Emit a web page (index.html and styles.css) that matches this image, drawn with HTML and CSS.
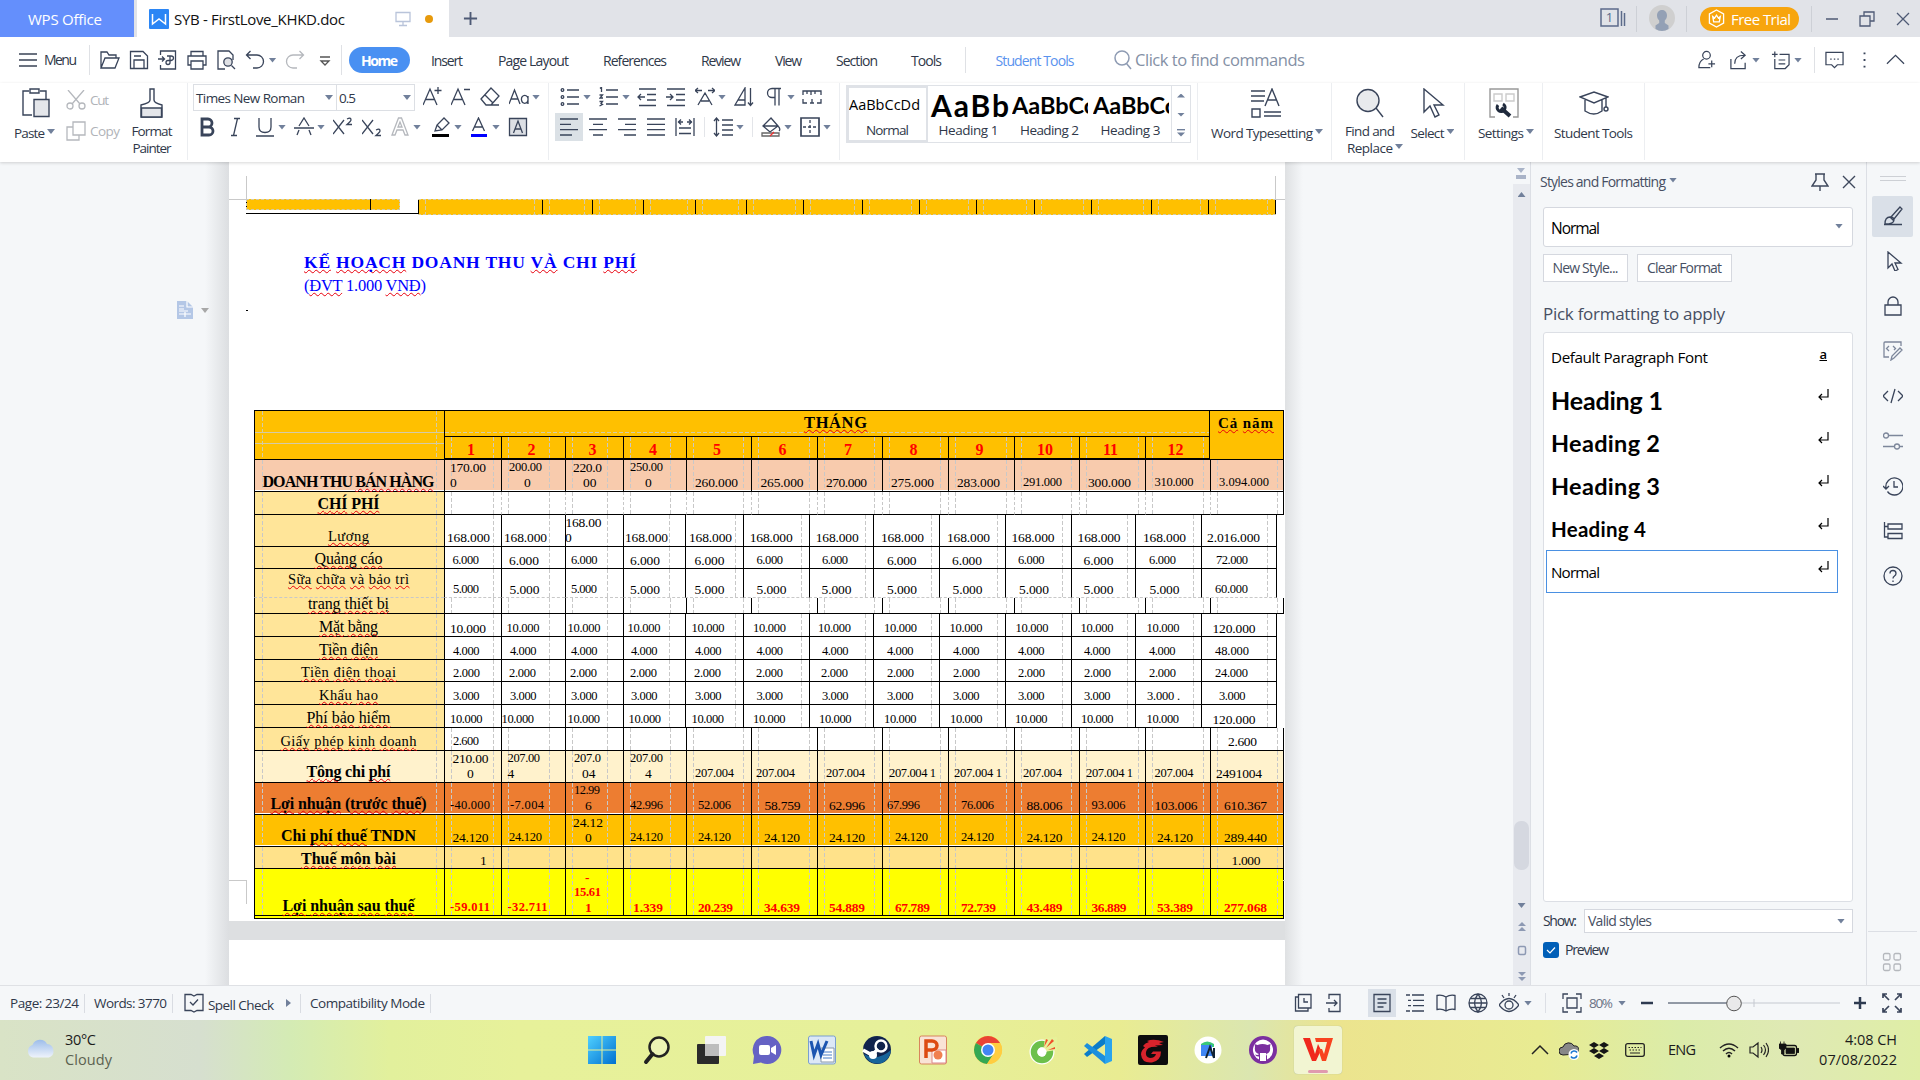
FILE: index.html
```html
<!DOCTYPE html>
<html lang="en">
<head>
<meta charset="utf-8">
<title>SYB - FirstLove_KHKD.doc</title>
<link rel="stylesheet" href="styles.css">
</head>
<body>
<header class="titlebar">
  <div class="tab-home"><span data-w="74">WPS Office</span></div>
  <div class="tab-doc">
    <svg class="wlogo" viewBox="0 0 20 20"><rect width="20" height="20" rx="1" fill="#2b86f5"/><path d="M3.500 5v10l6.500-5 6.500 5V5" fill="none" stroke="#fff" stroke-width="1.500"/></svg>
    <span data-w="171">SYB - FirstLove_KHKD.doc</span>
    <svg class="monitor" viewBox="0 0 16 16"><path d="M1 1.500h14v9H1zM8 10.500v3.500M4 14.500h8" fill="none" stroke="#b9c4da" stroke-width="1.300"/></svg>
    <i class="unsaved"></i>
  </div>
  <svg class="plus" viewBox="0 0 16 16"><path d="M8 1v14M1 8h14" stroke="#4e5a75" stroke-width="2"/></svg>
  <div class="window-tools">
    <svg class="wt1" viewBox="0 0 26 20"><path d="M1 1h17v17H1zM21.500 3v15M24.500 5v13" fill="none" stroke="#5c6b8a" stroke-width="1.500"/><text x="9.500" y="14" text-anchor="middle">1</text></svg>
    <div class="avatar"><svg viewBox="0 0 26 26"><circle cx="13" cy="13" r="13" fill="#cfcfcf"/><path d="M13 5c3.300 0 5 2.500 5 5.500 0 2-1 4-2.200 5v2.500l3.700 2.500v3.500c-4 2.500-9 2.500-13 0v-3.500l3.700-2.500v-2.500C9 14.500 8 12.500 8 10.500 8 7.500 9.700 5 13 5z" fill="#93a0b5"/></svg></div>
    <div class="trial-box"><div class="trial"><svg viewBox="0 0 18 20"><path d="M9 1l7.500 4.200v9.600L9 19l-7.500-4.200V5.200zM5 8l2 1.500L9 6.500l2 3L13 8l-1 5.500H6z" fill="none" stroke="#fff" stroke-width="1.400"/></svg><span data-w="60">Free Trial</span></div></div>
    <svg class="wmin" viewBox="0 0 12 12"><path d="M0 6h12" stroke="#4e5a75" stroke-width="1.500"/></svg>
    <svg class="wmax" viewBox="0 0 16 16"><path d="M1 5h10v10H1zM5 5V1h10v9h-4" fill="none" stroke="#4e5a75" stroke-width="1.300"/></svg>
    <svg class="wclose" viewBox="0 0 14 14"><path d="M1 1l12 12M13 1L1 13" stroke="#4e5a75" stroke-width="1.300"/></svg>
  </div>
</header>

<nav class="menubar">
  <div class="menu-btn"><svg viewBox="0 0 18 14"><path d="M0 1h18M0 7h18M0 13h18" stroke="#3a4356" stroke-width="1.300"/></svg><span data-w="33">Menu</span></div>
  <svg class="ic" viewBox="0 0 20 20"><path d="M1 18V2h6l2 3h7v3M1 18h14l4-10H5z"/></svg>
  <svg class="ic" viewBox="0 0 20 20"><path d="M1.500 1.500H14l4.500 4.500v12.500h-17zM5 18V10h10v8M5 6h7"/></svg>
  <svg class="ic" viewBox="0 0 20 20"><path d="M2.500 5V1h15v18h-15v-4M0 9h6M4 6.500L6.500 9 4 11.500M9 6h4q2.500 0 2.500 2T13 10.500h-3q-2 0-2 2t2 2 2-2V6"/></svg>
  <svg class="ic" viewBox="0 0 20 20"><path d="M4 6V1.500h12V6M4 15H1V6h18v9h-3M4 11h12v8H4z"/></svg>
  <svg class="ic" viewBox="0 0 20 20"><path d="M9 19H2V1h11l4 4v5M15.500 15.500L19 19"/><circle cx="12" cy="12" r="4.200" fill="#dfe1e5"/></svg>
  <svg class="ic" viewBox="0 0 20 20"><path d="M5.500 1L1.500 5l4 4M1.500 5H12a6 6 0 010 13H8"/></svg>
  <i class="caret"></i>
  <svg class="ic dim" viewBox="0 0 20 20"><path d="M14.500 1l4 4-4 4M18.500 5H8a6 6 0 000 13h4"/></svg>
  <svg class="ic s" viewBox="0 0 20 20"><path d="M5 7h10M6 11h8l-4 4z"/></svg>
  <i></i>
  <b class="home-pill"><span data-w="37">Home</span></b>
  <span data-w="32">Insert</span>
  <span data-w="71">Page Layout</span>
  <span data-w="64">References</span>
  <span data-w="40">Review</span>
  <span data-w="27">View</span>
  <span data-w="42">Section</span>
  <span data-w="31">Tools</span>
  <div class="student"><span data-w="79">Student Tools</span></div>
  <div class="search"><svg viewBox="0 0 18 20"><circle cx="8" cy="8" r="7"/><path d="M12.500 13.500L17 19"/></svg><span data-w="170">Click to find commands</span></div>
  <div class="menu-right">
    <svg class="ic" viewBox="0 0 20 20"><circle cx="10" cy="5" r="4"/><path d="M7 9c-4 2-5 5-5 9h12M12 14h7M15.500 10.500v7"/></svg>
    <svg class="ic" viewBox="0 0 20 20"><path d="M2 9v10h15v-6M6 14c0-6 3-9 10-9M12.500 1L17 5l-4.500 4"/></svg><i class="caret"></i>
    <svg class="ic" viewBox="0 0 20 20"><path d="M4 1v6M1 4h6M9 4h10v11l-4 4H4V9M8 10h7M8 14h7"/></svg><i class="caret"></i>
    <i class="bar"></i>
    <svg class="ic" viewBox="0 0 20 20"><path d="M1 2h18v13h-6l-3 3-3-3H1zM5.500 9h1.500M9.300 9h1.500M13 9h1.500" /></svg>
    <svg class="ic" viewBox="0 0 20 20"><path d="M10 2v2M10 9v2M10 16v2" stroke-width="2"/></svg>
    <svg class="ic" viewBox="0 0 20 20"><path d="M1 14l9-9 9 9"/></svg>
  </div>
</nav>

<section class="ribbon">
  <div class="group clipboard">
    <div class="tool"><svg class="big" viewBox="0 0 28 30"><path d="M7 3H1v24h9M18 3h6v8M8 1h9v4H8z"/><path d="M12 11.500h15v17H12z" fill="#e4e6ea"/></svg><span class="lb"><span data-w="31">Paste</span><i class="caret"></i></span></div>
    <div class="cutcopy">
      <div><svg class="ic dim" viewBox="0 0 20 20"><path d="M2 0l12 14M18 0L6 14"/><circle cx="4" cy="16" r="3"/><circle cx="16" cy="16" r="3"/></svg><span data-w="19">Cut</span></div>
      <div><svg class="ic dim" viewBox="0 0 20 20"><path d="M7 1h12v13H7zM7 6H1v13h12v-5"/></svg><span data-w="30">Copy</span></div>
    </div>
    <div class="tool two"><svg class="big" viewBox="0 0 28 30"><path d="M12 1h4v11q0 3 8 5v12H3V17q9-2 9-5z"/><path d="M3.500 20h20v9h-20z" fill="#e4e6ea"/></svg><span data-w="41">Format</span><span data-w="39">Painter</span></div>
  </div>

  <div class="group font">
    <div class="row f1">
      <div class="combo"><span data-w="109">Times New Roman</span><i class="caret"></i></div>
      <div class="combo c2"><span data-w="17">0.5</span><i class="caret"></i></div>
      <svg class="ic" viewBox="0 0 20 20"><path d="M0 18L7 2l7 16M2.500 12.500h9M15 0v7M11.500 3.500h7"/></svg>
      <svg class="ic" viewBox="0 0 20 20"><path d="M0 18L7 2l7 16M2.500 12.500h9M13 2.500h6"/></svg>
      <svg class="ic" viewBox="0 0 20 20"><path d="M1 12L11 1l8 8-8 9H6zM6 18h13M5 8l8 8"/></svg>
      <div class="tb"><svg class="ic" viewBox="0 0 20 20"><path d="M0 17L5.500 3 11 17M2 12h7M19 17V9M19 13a3.300 4 0 10-6.500 0 3.300 4 0 006.500 0"/></svg><i class="caret"></i></div>
    </div>
    <div class="row f2">
      <svg class="ic" viewBox="0 0 20 20"><path d="M4 2h6a4 4 0 010 8H4zM4 10h7a4 4 0 010 8H4z" stroke-width="2.800"/></svg>
      <svg class="ic" viewBox="0 0 20 20"><path d="M8 1.500h6M5 18.500h6M11.500 1.500l-4 17"/></svg>
      <div class="tb"><svg class="ic" viewBox="0 0 20 20"><path d="M4 1v9q0 5.500 6 5.500t6-5.500V1M1 19h18"/></svg><i class="caret"></i></div>
      <div class="tb"><svg class="ic" viewBox="0 0 20 20"><path d="M5 9l5-8 5 8M3 18l2-5M17 18l-2-5M0 11h20"/></svg><i class="caret"></i></div>
      <svg class="ic" viewBox="0 0 20 20"><path d="M0 3l11 14M11 3L0 17M14 2q4-2 4 1 0 1-4 4.500h5"/></svg>
      <svg class="ic" viewBox="0 0 20 20"><path d="M0 3l11 14M11 3L0 17M14 13q4-2 4 1 0 1-4 4.500h5"/></svg>
      <div class="tb"><svg class="ic dim" viewBox="0 0 20 20"><path d="M2 18L8.500 1h3L18 18h-3l-2-5H7l-2 5zM8 10h4l-2-5z"/></svg><i class="caret"></i></div>
      <div class="tb"><svg class="ic" viewBox="0 0 20 20"><path d="M4 14l2-6 7-7 5 5-7 7zM6 8l5 5"/><path d="M1 18.500h17" stroke="#000" stroke-width="3"/></svg><i class="caret"></i></div>
      <div class="tb"><svg class="ic" viewBox="0 0 20 20"><path d="M3.500 14L9.500 1l6 13M5.500 10h8"/><path d="M2 18.500h16" stroke="#00f" stroke-width="3"/></svg><i class="caret"></i></div>
      <svg class="ic" viewBox="0 0 20 20"><path d="M1.500 1.500h17v17h-17z" fill="#dcdfe4"/><path d="M5.500 16L10 4l4.500 12M7 12h6"/></svg>
    </div>
  </div>

  <div class="group para">
    <div class="row p1">
      <div class="tb"><svg class="ic" viewBox="0 0 20 20"><path d="M7 3h12M7 10h12M7 17h12"/><circle cx="2.500" cy="3" r="1.300"/><circle cx="2.500" cy="10" r="1.300"/><circle cx="2.500" cy="17" r="1.300"/></svg><i class="caret"></i></div>
      <div class="tb"><svg class="ic" viewBox="0 0 20 20"><path d="M7 3h12M7 10h12M7 17h12M1 1.500L2.500 0v5M0.500 8h3L1 11h3M0.500 14.500h3L2 16.500l1.500 1-3 1.500"/></svg><i class="caret"></i></div>
      <svg class="ic" viewBox="0 0 20 20"><path d="M2 2h17M10 7.500h9M10 13h9M2 18.500h17M8 10H1M4 7l-3 3 3 3"/></svg>
      <svg class="ic" viewBox="0 0 20 20"><path d="M1 2h18M10 7.500h9M10 13h9M1 18.500h18M0 10h7M4 7l3 3-3 3"/></svg>
      <div class="tb"><svg class="ic" viewBox="0 0 20 20"><path d="M3 18l7-12 7 12M6 14h8M0 3.500h7M13 3.500h7M3 1L0 3.500 3 6M17 1l3 2.500L17 6"/></svg><i class="caret"></i></div>
      <svg class="ic" viewBox="0 0 20 20"><path d="M1 18L11 1v17zM4 13h7M16.500 1v17M14 15.500l2.500 3 2.500-3"/></svg>
      <div class="tb"><svg class="ic" viewBox="0 0 20 20"><path d="M17 1.500H8a4.500 4.500 0 000 9h3M11 1.500v17M15 1.500v17"/></svg><i class="caret"></i></div>
      <svg class="ic" viewBox="0 0 20 20"><path d="M1 8V4h18v4M5 4v3M9 4v4M13 4v3M1 12v4h4M19 12v4h-4M8 16h4M10 12v4"/></svg>
    </div>
    <div class="row p2">
      <svg class="ic on" viewBox="0 0 20 20"><path d="M1 2h18M1 7.300h11M1 12.700h18M1 18h12"/></svg>
      <svg class="ic" viewBox="0 0 20 20"><path d="M1 2h18M5 7.300h10M1 12.700h18M5 18h10"/></svg>
      <svg class="ic" viewBox="0 0 20 20"><path d="M1 2h18M8 7.300h11M1 12.700h18M7 18h12"/></svg>
      <svg class="ic" viewBox="0 0 20 20"><path d="M1 2h18M1 7.300h18M1 12.700h18M1 18h18"/></svg>
      <svg class="ic" viewBox="0 0 20 20"><path d="M1 1v18M19 1v18M4 11h12M4 16.500h12M3 5h5M12 5h5M6 2.500L3.500 5 6 7.500M14 2.500L16.500 5 14 7.500"/></svg>
      <div class="tb pre"><svg class="ic" viewBox="0 0 20 20"><path d="M9 3h11M9 8h11M9 13h11M9 18h11M3.500 1v18M1 4l2.500-3L6 4M1 16l2.500 3L6 16"/></svg><i class="caret"></i></div>
      <div class="tb pre"><svg class="ic" viewBox="0 0 20 20"><path d="M2 9l8-8 7 8-8 6zM3 9h13M17 9q3 3 1 5"/><path d="M1 16h17v3H1z" stroke="#666"/><path d="M9 19l4-4" stroke="#e33"/></svg><i class="caret"></i></div>
      <div class="tb"><svg class="ic" viewBox="0 0 20 20"><path d="M1 1h18v18H1z" stroke-width="1.700"/><path d="M10 3v14M3 10h14" stroke-dasharray="3 2"/></svg><i class="caret"></i></div>
    </div>
  </div>

  <div class="group styles">
    <div class="gallery">
      <div class="st sel"><span class="smp n" data-w="71">AaBbCcDd</span><span class="nm" data-w="43">Normal</span></div>
      <div class="st"><span class="smp h1" data-w="78">AaBb</span><span class="nm" data-w="60">Heading 1</span></div>
      <div class="st"><span class="smp h2">AaBbCc</span><span class="nm" data-w="59">Heading 2</span></div>
      <div class="st"><span class="smp h2">AaBbCc</span><span class="nm" data-w="60">Heading 3</span></div>
      <div class="gscroll"><i class="caret up"></i><i class="caret"></i><svg viewBox="0 0 10 8"><path d="M1 .7h8" stroke="#71809b" stroke-width="1.400"/><path d="M1 3.500h8L5 7.500z" fill="#71809b"/></svg></div>
    </div>
  </div>

  <div class="group one word"><div class="tool"><svg class="big w30" viewBox="0 0 30 30"><path d="M0 3h14M0 8h14M0 13h13M13 24h17M13 28h17M1 21h8v8H1zM14 18l7-17 7 17M17 12h8"/></svg><span class="lb"><span data-w="102">Word Typesetting</span><i class="caret"></i></span></div></div>
  <div class="group find">
    <div class="tool two"><svg class="big" viewBox="0 0 28 30"><ellipse cx="12" cy="12.500" rx="11" ry="11" fill="#e8eaed"/><path d="M20 20l7 9"/></svg><span data-w="50">Find and</span><span class="lb"><span data-w="46">Replace</span><i class="caret"></i></span></div>
    <div class="tool pick"><svg class="big" viewBox="0 0 28 30"><path d="M5 1v23l6-6 5 11 4-2-5-10h9z"/></svg><span class="lb"><span data-w="34">Select</span><i class="caret"></i></span></div>
  </div>
  <div class="group one setup"><div class="tool"><svg class="big w30" viewBox="0 0 30 30"><path d="M6 29H1V1h28v28h-5" stroke="#999"/><path d="M5 6h8v7H5zM17 6h8v7h-8z" stroke="#ccc"/><path d="M12 20l9 8" stroke-width="4" stroke="#1f2a3c"/><path d="M9 17a4 4 0 105-1" stroke-width="3" stroke="#1f2a3c"/></svg><span class="lb"><span data-w="46">Settings</span><i class="caret"></i></span></div></div>
  <div class="group one campus"><div class="tool"><svg class="big w30" viewBox="0 0 30 30"><path d="M1 9l14-5 14 5-14 6zM6 12v11q9 6 17 0V12M27 10v9"/><circle cx="27" cy="21" r="2"/></svg><span class="lb"><span data-w="79">Student Tools</span></span></div></div>
</section>

<main class="workspace">
  <div class="gutter">
    <svg viewBox="0 0 16 18"><path d="M0 0h10l6 6v12H0z" fill="#b4c7e6"/><path d="M10 0v6h6M2 5h5M2 8h5M2 10h9M2 13h12M8 11v5" fill="none" stroke="#fff" stroke-width="1.200"/></svg><i class="caret"></i>
  </div>
  <div class="pages">
    <article class="page">
      <i class="mark tl"></i><i class="mark tr"></i><i class="mark bl"></i><i class="mark br"></i><i class="dot"></i>
      <div class="prev-table"><div class="stub"><i></i></div><div class="stub-row" id="stubRow"></div></div>
      <h1><span data-w="332"><u>KẾ</u> <u>HOẠCH</u> DOANH THU <u>VÀ</u> CHI <u>PHÍ</u></span></h1>
      <p class="unit"><span data-w="122">(<u>ĐVT</u> 1.000 <u>VNĐ</u>)</span></p>
      <div class="plan" id="plan">
        <div class="phead">
          <div class="pcorner"></div>
          <div class="pmid"><div class="pm-title"><span data-w="63"><u>THÁNG</u></span></div><div class="pm-months" id="months"></div></div>
          <div class="pyear"><span data-w="55"><u>Cả</u> <u>năm</u></span></div>
        </div>
      </div>
    </article>
    <div class="gap"></div>
    <div class="page next"></div>
  </div>
  <div class="rgutter"></div>
  <div class="vscroll">
    <svg class="vtop" viewBox="0 0 10 11"><path d="M1 0h8L5 5zM0 7h10v4H0z" fill="#aab4c8"/></svg>
    <div class="track"><i class="caret up"></i><i class="thumb"></i><i class="caret"></i>
      <svg viewBox="0 0 10 60"><path d="M5 1l4 4H1zM5 6l4 4H1zM1 51h8l-4 4zM1 56h8l-4 4z" fill="#8d99b3"/><rect x="1.500" y="25.500" width="7" height="8" rx="1.500" fill="none" stroke="#8d99b3" stroke-width="1.500"/></svg></div>
  </div>

  <aside class="panel">
    <div class="p-head"><span data-w="126">Styles and Formatting</span><i class="caret"></i>
      <svg class="pin" viewBox="0 0 18 18"><path d="M4 1h10M5 1v6l-4 6h16l-4-6V1M9 13v5" /></svg>
      <svg class="px" viewBox="0 0 14 14"><path d="M1 1l12 12M13 1L1 13"/></svg></div>
    <div class="p-combo"><span data-w="49">Normal</span><i class="caret"></i></div>
    <div class="p-btns"><div><span data-w="66">New Style...</span></div><div><span data-w="75">Clear Format</span></div></div>
    <div class="p-pick"><span data-w="182">Pick formatting to apply</span></div>
    <div class="p-list">
      <div class="pi d"><span data-w="157">Default Paragraph Font</span><em>a</em></div>
      <div class="pi h a"><span data-w="112">Heading 1</span><svg viewBox="0 0 12 12"><path d="M11 0v8H2M5 5L2 8l3 3"/></svg></div>
      <div class="pi h b"><span data-w="109">Heading 2</span><svg viewBox="0 0 12 12"><path d="M11 0v8H2M5 5L2 8l3 3"/></svg></div>
      <div class="pi h b"><span data-w="109">Heading 3</span><svg viewBox="0 0 12 12"><path d="M11 0v8H2M5 5L2 8l3 3"/></svg></div>
      <div class="pi h c"><span data-w="95">Heading 4</span><svg viewBox="0 0 12 12"><path d="M11 0v8H2M5 5L2 8l3 3"/></svg></div>
      <div class="pi cur"><span data-w="49">Normal</span><svg viewBox="0 0 12 12"><path d="M11 0v8H2M5 5L2 8l3 3"/></svg></div>
    </div>
    <div class="p-show"><span data-w="34">Show:</span><div><span data-w="64">Valid styles</span><i class="caret"></i></div></div>
    <div class="p-prev"><svg viewBox="0 0 16 16"><rect width="16" height="16" rx="3" fill="#005fb8"/><path d="M4 8l3 3 5-5.500" fill="none" stroke="#fff" stroke-width="1.200"/></svg><span data-w="44">Preview</span></div>
  </aside>

  <aside class="rail">
    <i class="grip"></i>
    <div class="on"><svg class="ic" viewBox="0 0 20 20"><path d="M1 18.500h18M8 11l9-10 2 2-8 10M2 18q0-7 5-7 4 0 4 3 0 4-9 4zM7 11l4 4"/></svg></div>
    <div><svg class="ic" viewBox="0 0 20 20"><path d="M5 1v16l4-4 3 7 3-1.500L12 12h6z"/></svg></div>
    <div><svg class="ic" viewBox="0 0 20 20"><path d="M2 9h16v10H2zM5 9V6a5 5 0 0110 0v3"/></svg></div>
    <div><svg class="ic soft" viewBox="0 0 20 20"><path d="M6 16H1V2q0-1 1-1h16v4M6 5L3.500 7.500 6 10M10 5l2.500 2.500L11 9M8 19l1-4 8-8 2 2-8 8z"/></svg></div>
    <div><svg class="ic" viewBox="0 0 20 20"><path d="M5 5l-5 5 5 5M15 5l5 5-5 5M12 3L8 17"/></svg></div>
    <div><svg class="ic soft" viewBox="0 0 20 20"><circle cx="3" cy="4.500" r="2.500"/><circle cx="14" cy="15.500" r="2.500"/><path d="M6 4.500h14M0 15.500h11M17 15.500h3"/></svg></div>
    <div><svg class="ic" viewBox="0 0 20 20"><path d="M3 12a8.500 8.500 0 111.500 3.500M0 10l3 3 3-3M11 5v6h4"/></svg></div>
    <div><svg class="ic" viewBox="0 0 20 20"><path d="M1.500 1v15H5M1.500 5.500H5M5 3h14v5H5zM5 12.500h14v5H5z"/></svg></div>
    <div><svg class="ic" viewBox="0 0 20 20"><circle cx="10" cy="10" r="9"/><path d="M7 7.500q0-3 3-3t3 3q0 1.500-1.500 2.500T10 12.500M10 14.500v1.500"/></svg></div>
    <footer><svg class="ic dim" viewBox="0 0 20 20"><rect x="1.500" y="1.500" width="6.500" height="6.500" rx="1.500"/><rect x="12" y="1.500" width="6.500" height="6.500" rx="1.500"/><rect x="1.500" y="12" width="6.500" height="6.500" rx="1.500"/><rect x="12" y="12" width="6.500" height="6.500" rx="1.500"/></svg></footer>
  </aside>
</main>

<section class="status">
  <div class="s1"><span data-w="69">Page: 23/24</span></div>
  <div class="s2"><span data-w="73">Words: 3770</span></div>
  <div class="s3"><svg class="ic" viewBox="0 0 20 20"><path d="M1 1.500h6l3 1.500 3-1.500h6v16h-6L10 19l-3-1.500H1zM6 9l3 3 5-5.500"/></svg><span data-w="66">Spell Check</span><i class="caret right"></i></div>
  <div class="s4"><span data-w="115">Compatibility Mode</span></div>
  <div class="s-right">
    <svg class="ic" viewBox="0 0 20 20"><path d="M5 4H2.500V18H15v-3M5.500 1.500H18V15H5.500zM11 5v4h4"/></svg>
    <svg class="ic" viewBox="0 0 20 20"><path d="M4 6V1.500h11V6M15 13v5.500H4V15M1 10h11M9 7l3 3-3 3M15 6v7"/></svg>
    <div class="act"><svg class="ic" viewBox="0 0 20 20"><path d="M2 1.500h16v17H2zM5.500 6h9M5.500 10h9M5.500 14h6"/></svg></div>
    <svg class="ic" viewBox="0 0 20 20"><path d="M1 2h4M7 2h12M3 7.300h3M8 7.300h11M3 12.600h3M8 12.600h11M1 18h4M7 18h12"/></svg>
    <svg class="ic" viewBox="0 0 20 20"><path d="M10 4Q6 1.500 1 2.500v14q5-1 9 1.500 4-2.500 9-1.500v-14q-5-1-9 1.500v14"/></svg>
    <svg class="ic" viewBox="0 0 20 20"><circle cx="10" cy="10" r="9"/><path d="M1 10h18M10 1q-7 9 0 18 7-9 0-18M2.500 5.500h15M2.500 14.500h15"/></svg>
    <svg class="ic" viewBox="0 0 20 20"><path d="M0 12q10-13 20 0-10 13-20 0zM10 0v3M3 2l2 3M17 2l-2 3"/><circle cx="10" cy="12" r="4"/></svg>
    <i class="caret"></i>
    <div class="fit"><svg class="ic" viewBox="0 0 20 20"><path d="M1 6V1h5M14 1h5v5M19 14v5h-5M6 19H1v-5M5 5h10v10H5z"/></svg></div>
    <span data-w="24">80%</span><i class="caret"></i>
    <svg class="pm" viewBox="0 0 12 12"><path d="M0 6h12" stroke="#2d3a50" stroke-width="2.500"/></svg>
    <svg class="slider" viewBox="0 0 172 20"><path d="M66 10h106M86 6v8" stroke="#c5c9d0"/><path d="M0 10h60" stroke="#2d3a50"/><circle cx="66" cy="10.500" r="7.300" fill="#e9e9ea" stroke="#555"/></svg>
    <svg class="pm" viewBox="0 0 12 12"><path d="M0 6h12M6 0v12" stroke="#2d3a50" stroke-width="2.500"/></svg>
    <svg class="ic" viewBox="0 0 20 20"><path d="M7 7L1 1M1 5V1h4M13 7l6-6M15 1h4v4M7 13l-6 6M1 15v4h4M13 13l6 6M19 15v4h-4" stroke-width="1.700"/></svg>
  </div>
</section>

<footer class="taskbar">
  <div class="weather"><svg viewBox="0 0 30 20"><defs><linearGradient id="cl" x1="0" y1="0" x2="0" y2="1"><stop offset="0" stop-color="#9dbdea"/><stop offset="1" stop-color="#eef3fb"/></linearGradient></defs><path d="M7 19.500a6.500 6.500 0 01-.5-12.500A8 8 0 0121 6a7 7 0 012 13.500z" fill="url(#cl)"/></svg>
    <div><span data-w="31">30°C</span><span class="g" data-w="47">Cloudy</span></div></div>
  <div class="apps">
    <svg viewBox="0 0 30 30"><defs><linearGradient id="wn" x1="0" y1="0" x2="1" y2="1"><stop offset="0" stop-color="#4fd0ff"/><stop offset="1" stop-color="#0070d0"/></linearGradient></defs><path d="M1 1h13.500v13.500H1zM15.500 1H29v13.500H15.500zM1 15.500h13.500V29H1zM15.500 15.500H29V29H15.500z" fill="url(#wn)"/></svg>
    <svg viewBox="0 0 30 30"><circle cx="17" cy="12" r="9.500" fill="#ffffff44" stroke="#222" stroke-width="2.500"/><path d="M10.500 19L4 27" stroke="#222" stroke-width="4" stroke-linecap="round"/></svg>
    <svg viewBox="0 0 30 30"><rect x="0" y="9" width="22" height="20" rx="1" fill="#2b2b2b"/><rect x="8" y="1" width="21" height="20" rx="1" fill="#f4f4f4"/><rect x="8" y="9" width="14" height="12" fill="#bdbdbd"/></svg>
    <svg viewBox="0 0 30 30"><path d="M15 1a14 14 0 11-6 26.500L1 29l1-8A14 14 0 0115 1z" fill="#6562c4"/><rect x="7" y="10" width="11" height="10" rx="2" fill="#fff"/><path d="M19 13l5-3v10l-5-3z" fill="#fff"/></svg>
    <svg viewBox="0 0 30 30"><rect x="1.500" y="1" width="27" height="28" rx="2" fill="#dce8f7" stroke="#7a9fd0"/><path d="M14 13h13v14H14z" fill="#fff" stroke="#89a"/><path d="M16 17h9M16 20h9M16 23h9" stroke="#4a7fc8"/><path d="M4 6l3 14 4-11 3 11L20 6" fill="none" stroke="#1c55b0" stroke-width="3"/></svg>
    <svg viewBox="0 0 30 30"><circle cx="15" cy="15" r="14" fill="#10234c"/><path d="M2 19q5 12 18 9 8-4 9-13-14 12-27 4z" fill="#17649a"/><circle cx="19" cy="11" r="5.500" fill="none" stroke="#fff" stroke-width="2.500"/><circle cx="11" cy="20" r="4" fill="#fff"/><path d="M1 15l9 5 6-6" stroke="#fff" stroke-width="3.500" fill="none"/></svg>
    <svg viewBox="0 0 30 30"><rect x="1.500" y="1" width="27" height="28" rx="2" fill="#f9e3d6" stroke="#d8855c"/><path d="M14 15h14v13H14z" fill="#fff" stroke="#d88"/><circle cx="20" cy="20" r="4.500" fill="#f08050"/><path d="M8 23V6h6a5 4.500 0 010 9H9" fill="none" stroke="#dd4b12" stroke-width="3.500"/></svg>
    <svg viewBox="0 0 30 30"><circle cx="15" cy="15" r="14" fill="#ffcd40"/><path d="M15 15L2.900 8A14 14 0 0127.100 8z" fill="#ea4335"/><path d="M15 15L2.900 8A14 14 0 0014 29l7-10z" fill="#34a853"/><path d="M15 8h12.100A14 14 0 0114 29l7-11z" fill="#ffcd40"/><circle cx="15" cy="15" r="7" fill="#fff"/><circle cx="15" cy="15" r="5.500" fill="#4285f4"/></svg>
    <svg viewBox="0 0 30 30"><circle cx="14" cy="17" r="8" fill="#fff" stroke="#fff" stroke-width="9"/><circle cx="14" cy="17" r="8" fill="none" stroke="#6dc04b" stroke-width="6.500"/><path d="M15 17l2-14 12-1v13z" fill="#e7f19a"/><path d="M16 12l2-8 2 1zM18 13l6-9 2 2zM20 15l7-3v2z" fill="#f0502a"/><path d="M16 17h9q-1 8-9 8z" fill="#6dc04b"/><circle cx="14" cy="17" r="4.500" fill="#fff"/></svg>
    <svg viewBox="0 0 30 30"><path d="M22 1l7 3v22l-7 3z" fill="#29a4ee"/><path d="M22 1L1 19l3 3L22 9z" fill="#0a7cc9"/><path d="M22 29L1 11l3-3 18 13z" fill="#1b8fdd"/></svg>
    <svg viewBox="0 0 30 30"><rect width="30" height="30" rx="2" fill="#0c0c0e"/><path d="M5 11q2-3 6-4l-2-1q7-3 17 1l-5 1 4 2-8 .5 3 1.500q-11-1-12 5-1 5 4 6 5 0 6-4h-5l2-2.500h8q0 9-9 11-10 1-11-8 0-4 4-7z" fill="#d8232c"/></svg>
    <svg viewBox="0 0 30 30"><circle cx="15" cy="15" r="13.500" fill="#fff"/><path d="M8 9q6-5 13 0v3H8z" fill="#39c77a"/><rect x="8" y="10" width="11" height="11" fill="#3f86f5"/><path d="M13 23l4-11 4 11M21 13v10" fill="none" stroke="#123" stroke-width="2"/></svg>
    <svg viewBox="0 0 30 30"><circle cx="15" cy="15" r="14" fill="#7b2fa0"/><path d="M15 4.500a10.500 10.500 0 00-4 20v-3q-3 .5-4-2 3 1 4-.5-5-1-4-7l-.5-3 3 1q5-2 10 0l3-1-.5 3q1 6-4 7l1 2v3.500A10.500 10.500 0 0015 4.500z" fill="#fff"/><path d="M10 13q5-3 10 0 1 6-5 6t-5-6z" fill="#7b2fa0"/><path d="M12 18h6v8h-6z" fill="#fff"/></svg>
    <div class="wps"><svg viewBox="0 0 30 30"><path d="M0 4h7l5 16 3-10 3 6-5 11H9z" fill="#f0281c"/><path d="M12 4h18l-7 23h-4l-4-12h4l2 5 3-12H13z" fill="#f8431f"/></svg></div>
  </div>
  <div class="tray">
    <svg class="t1" viewBox="0 0 20 20"><path d="M2 14l8-8 8 8" fill="none" stroke="#222" stroke-width="1.500"/></svg>
    <svg class="t2" viewBox="0 0 20 20"><path d="M4 15a4 4 0 010-8 6 6 0 0111-1 4 4 0 012 8z" fill="#888" stroke="#222"/><circle cx="15" cy="14.500" r="5.500" fill="#fff"/><path d="M12 13.500a3.300 3.300 0 016-1M18 15.500a3.300 3.300 0 01-6 1" fill="none" stroke="#1976d2" stroke-width="1.600"/></svg>
    <svg class="t3" viewBox="0 0 20 20"><path d="M5 2l5 3-5 3-5-3zM15 2l5 3-5 3-5-3zM5 8l5 3-5 3-5-3zM15 8l5 3-5 3-5-3zM10 13l5 3-5 3-5-3z" fill="#151515"/></svg>
    <svg class="t4" viewBox="0 0 20 20"><rect x=".7" y="3.700" width="18.600" height="12.600" rx="2" fill="none" stroke="#222" stroke-width="1.300"/><path d="M3.500 7.500h13M4.500 10h12" stroke="#222" stroke-dasharray="1.500 1.500"/><path d="M5 13h10" stroke="#222"/></svg>
    <span class="eng" data-w="28">ENG</span>
    <svg class="t5" viewBox="0 0 20 20"><path d="M1 8q9-8 18 0M4 11q6-5.500 12 0M7 14q3-3 6 0" fill="none" stroke="#222" stroke-width="1.500"/><circle cx="10" cy="16" r="1.500"/></svg>
    <svg class="t6" viewBox="0 0 20 20"><path d="M1 7h3l5-4v14l-5-4H1zM12 7q2 3 0 6M14.500 5q4 5 0 10M17 3q5 7 0 14" fill="none" stroke="#222" stroke-width="1.200"/></svg>
    <svg class="t7" viewBox="0 0 20 20"><rect x="4" y="5.500" width="13.500" height="10" rx="2" fill="none" stroke="#111" stroke-width="1.300"/><path d="M7 8h8.500v5.500H7zM18 8.500h2v4h-2zM0 4h7v4l-2 2v4H2.500v-4L0 8zM1.500 1.500v3M5 1.500v3" fill="#111" stroke="#111" stroke-width=".8"/></svg>
    <div class="clock"><span data-w="52">4:08 CH</span><span data-w="78">07/08/2022</span></div>
  </div>
</footer>
<script src="app.js"></script>
</body>
</html>
```
FILE: styles.css
```css
*{box-sizing:border-box}
body{margin:0;width:1920px;height:1080px;overflow:hidden;font:14px/18px "Open Sans","Noto Sans",sans-serif;color:#2f3849;background:#fff}
svg{display:block;flex:none}
span{white-space:nowrap}
.ic{width:20px;height:20px;fill:none;stroke:#39445a;stroke-width:1.3}
.ic.dim{stroke:#b5b8bd}
.ic.soft{stroke:#7d879b}
.ic.s{stroke:#555}
.caret{width:8px;height:5px;flex:none;background:#71809b;clip-path:polygon(0 0,100% 0,50% 100%)}
.caret.up{clip-path:polygon(50% 0,100% 100%,0 100%)}
.caret.right{width:5px;height:8px;clip-path:polygon(0 0,100% 50%,0 100%)}

.titlebar{display:flex;height:37px;background:#e1e3e8;align-items:center;font-size:15px}
.tab-home{width:134px;height:37px;background:#648ffc;color:#fff;display:flex;align-items:center;justify-content:center;margin-right:3px;padding:1px 4px 0 0}
.tab-doc{width:312px;height:37px;background:#fff;display:flex;align-items:center;padding-left:12px;color:#111}
.wlogo{width:20px;height:20px;margin-right:5px}
.monitor{width:16px;height:16px;margin-left:50px}
.unsaved{width:8px;height:8px;border-radius:50%;background:#e79a0c;margin-left:14px}
.plus{width:15px;height:15px;margin-left:14px}
.window-tools{margin-left:auto;width:320px;display:grid;grid-template-columns:36px 51px 125px 26px 42px 40px;height:26px;align-items:center}
.wt1{width:26px;height:20px;font-size:13px;fill:#5c6b8a;margin-top:-2px}
.avatar{border:solid #cdd0d6;border-width:0 1px;height:26px;padding-left:12px}
.avatar svg{width:26px;height:26px;margin-top:-1px}
.trial-box{border-right:1px solid #cdd0d6;height:26px;padding:1px 0 0 13px}
.trial{width:99px;height:24px;border-radius:12px;background:#f7a50e;color:#fff;display:flex;align-items:center;padding-left:8px;gap:6px}
.trial svg{width:17px;height:19px}
.wmin{width:12px;height:12px;justify-self:end}
.wmax{width:16px;height:16px;justify-self:end;margin-right:5px}
.wclose{width:14px;height:14px;justify-self:center;margin-left:5px}

.menubar{height:46px;display:grid;align-items:center;justify-items:center;grid-template-columns:95px 30px 28px 30px 28px 30px 27px 9px 35px 25px 12px 61px 74px 99px 104px 68px 67px 70px 69px 143px 1fr 225px}
.menu-btn{width:90px;height:30px;border-right:1px solid #dfe1e5;justify-self:start;display:flex;align-items:center;padding-left:19px;gap:7px}
.menu-btn svg{width:18px;height:14px}
.home-pill{width:61px;height:26px;border-radius:13px;background:#4990f2;color:#fff;display:flex;align-items:center;justify-content:center;padding-top:1px}
.menubar>i:nth-of-type(2){justify-self:start;width:5px;height:30px;border-right:1px solid #dfe1e5}
.menubar>span{padding-top:2px}
.student{border-left:1px solid #dfe1e5;width:139px;height:26px;justify-self:end;display:flex;justify-content:center;align-items:center;color:#5a93ee;padding-top:2px}
.search{justify-self:start;display:flex;align-items:center;font-size:16.5px;color:#8490a5;gap:3px;padding-left:10px}
.search svg{width:18px;height:20px;fill:none;stroke:#8e9bb3;stroke-width:1.5}
.menu-right{display:grid;grid-template-columns:32px 23px 19px 23px 20px 11px 30px 31px 20px;align-items:center;justify-self:start;padding-left:2px;width:225px}
.menu-right .ic{width:19px}
.menu-right .bar{width:1px;height:26px;background:#dfe1e5}

.ribbon{height:79px;display:flex;font-size:13.5px;position:relative;box-shadow:0 1px 3px rgba(0,0,0,.16)}
.group{height:77px;border-right:1px solid #eceef1;display:flex}
.tool{display:flex;flex-direction:column;align-items:center;padding-top:5px}
.tool .big{width:28px;height:30px;margin-bottom:7px}
.tool .big.w30{width:30px}
.tool.two .big{margin-bottom:5px}
.tool.two>span{line-height:17px}
.big{fill:none;stroke:#39445a;stroke-width:1.4}
.lb{display:flex;align-items:flex-start;line-height:17px}
.lb .caret{margin:4px -10px 0 2px}
.clipboard{width:188px}
.clipboard .tool:first-child{width:59px}
.clipboard .tool:first-child .big{margin-left:12px}
.clipboard .two{width:52px}
.cutcopy{width:67px;padding:7px 0 0 7px;color:#b0b3b8}
.cutcopy div{display:flex;align-items:center;gap:4px;height:20px;margin-bottom:11px}
.font{width:361px;flex-direction:column}
.row{display:grid;align-items:center;height:28px}
.tb{display:flex;align-items:center;gap:3px}
.f1{grid-template-columns:144px 86px 28px 29px 29px 40px;padding-left:5px}
.f2{grid-template-columns:28px 29px 39px 39px 29px 28px 41px 38px 39px 30px;padding-left:10px;margin-top:2px}
.combo{height:27px;border:1px solid #dcdfe4;display:flex;align-items:center;justify-content:space-between;padding:1px 3px 0 2px}
.combo.c2{width:79px;margin-left:-1px}
.para{width:291px;flex-direction:column}
.p1{grid-template-columns:39px 38px 29px 29px 39px 30px 38px 30px;padding-left:11px}
.p2{grid-template-columns:29px 29px 29px 29px 38px 48px 39px 30px;padding-left:10px;margin-top:2px}
.on.ic{outline:4px solid #dbe1e6;background:#dbe1e6}
.pre{border-left:1px solid #e3e5e9;margin-left:-9px;padding-left:8px}
.styles{width:358px;padding:2px 0 0 6px}
.gallery{width:345px;height:58px;border:1px solid #dfe2e7;display:grid;grid-template-columns:81px 81px 81px 81px 19px}
.st{display:flex;flex-direction:column;align-items:center;overflow:hidden}
.st.sel{outline:2px solid #dfe2e7;outline-offset:-2px}
.smp{height:36px;line-height:37px;align-self:flex-start;margin-left:3px;color:#000;width:76px;overflow:hidden}
.smp.n{font-size:14.5px;margin-left:2px;width:auto;overflow:visible}
.smp.h1{font:bold 30px/38px Lato,"Open Sans",sans-serif;overflow:visible}
.smp.h2{font:bold 23.5px/38px Lato,"Open Sans",sans-serif}
.nm{line-height:17px}
.gscroll{border-left:1px solid #dfe2e7;display:grid;grid-template-rows:19px 19px 18px;place-items:center}
.gscroll svg{width:10px;height:8px}
.gscroll .caret{height:4px}
.one{justify-content:center}
.word{width:134px}.setup{width:78px}.campus{width:102px}
.one .tool{padding-right:5px}
.word .big{margin-left:8px}
.setup .big{margin-left:6px}
.campus .tool{padding-right:0}
.find{width:133px;padding-left:8px}
.find .two{width:60px}
.find .pick{width:55px}
.pick .big{margin-left:10px}

.workspace{display:grid;grid-template-columns:229px 1056px 228px 18px 335px 54px;height:823px;background:#f5f7f9}
.ribbon{z-index:1}
.gutter{background:linear-gradient(90deg,transparent 205px,#dcdee1);padding:139px 0 0 177px;display:flex;gap:8px;align-items:flex-start}
.gutter svg{width:16px;height:18px}
.gutter .caret{margin-top:7px;background:#a8a8a8}
.rgutter{background:linear-gradient(90deg,#dfe1e3,transparent 18px)}
.page{background:#fff;height:759px;position:relative;overflow:hidden;font-family:"Liberation Serif",serif}
.gap{height:19px;background:#dddfe1}
.page.next{height:45px}
.mark{position:absolute;border:0 solid #c9c9c9}
.tl{left:0;top:14px;width:18px;height:24px;border-width:0 1px 1px 0}
.tr{left:1046px;top:14px;width:10px;height:24px;border-width:0 0 1px 1px}
.bl{left:0;top:718px;width:18px;height:24px;border-width:1px 1px 0 0}
.br{left:1054px;top:718px;width:2px;height:1px;border-width:1px 0 0}
.dot{position:absolute;left:17px;top:148px;width:2px;height:1px;background:#000}
.prev-table{display:flex;padding:37px 0 0 17px;height:53px}
.stub{width:172px;height:15px;border-bottom:1px solid #000}
.stub i{display:block;width:154px;height:11px;background:linear-gradient(90deg,#000 0 1px,transparent 1px 124px,#000 124px 125px,transparent 125px),#ffc000;outline:1px dashed #d3cba8;outline-offset:-1px}
.stub-row{display:flex;height:16px;background:#ffc000;border-top:1px dashed #d3cba8;border-bottom:1px dashed #d3cba8}
.stub-row i{border-left:1px solid #000;background:repeating-linear-gradient(#d3cba8 0 4px,transparent 4px 6px) 6px 0/1px 100% no-repeat,repeating-linear-gradient(#d3cba8 0 4px,transparent 4px 6px) calc(100% - 7px) 0/1px 100% no-repeat}
.stub-row i:last-child{border-right:1px solid #000}
u{text-decoration:underline wavy #e8000c .8px;text-underline-offset:1px;text-decoration-skip-ink:none}
.page h1{margin:36px 0 2px 75px;font:bold 17.500px/22px "Liberation Serif",serif;color:#00f}
.unit{margin:0 0 0 75px;font-size:16.500px;line-height:22px;color:#00f}
.plan{margin:113px 0 0 25px;width:1030px;color:#000}
.phead{display:flex;height:50px;border:1px solid #000;background:#ffc000;font-weight:bold;font-size:16.500px;line-height:20px}
.pcorner{width:189px;background:repeating-linear-gradient(#d3cba8 0 4px,transparent 4px 6px) 7px 0/1px 100% no-repeat,repeating-linear-gradient(#d3cba8 0 4px,transparent 4px 6px) 181px 0/1px 100% no-repeat,linear-gradient(#d3cba8,#d3cba8) 0 21px/100% 1px no-repeat,linear-gradient(#d3cba8,#d3cba8) 0 32px/100% 1px no-repeat}
.pmid{width:766px;border:solid #000;border-width:0 1px}
.pm-title{height:26px;border-bottom:1px solid #000;padding:2px 0 0 359px;background:repeating-linear-gradient(90deg,#d3cba8 0 4px,transparent 4px 6px) 0 21px/100% 1px no-repeat}
.pm-months{display:flex;height:22px;color:#f00}
.pm-months .cell{height:22px;justify-content:flex-start;border-left:1px solid #000}
.pm-months .cell:first-child{border-left:0}
.pyear{flex:1;padding:2px 0 0 8px;font-size:15px}
.prow{display:flex}
.cell{flex:none;display:flex;flex-direction:column;justify-content:flex-end;border:0 solid #000;border-width:0 0 1px 1px;background-image:repeating-linear-gradient(#c8c8c8 0 4px,transparent 4px 6px),repeating-linear-gradient(#c8c8c8 0 4px,transparent 4px 6px);background-size:1px 100%;background-repeat:no-repeat;background-position:var(--gl) 0,var(--gr) 0}
.cell:last-child{border-right-width:1px}
.cell span{font-size:13.500px;line-height:15px;align-self:flex-start}
.pm-months .cell span{font-size:16px;line-height:25px;align-self:center;margin-left:-4px}
.cell.label span{font-size:16px;line-height:18px;align-self:center;margin-left:-2px}
.cell.label.loose span{font-size:14.500px}
.cell span.sm{font-size:12.500px}
.val{padding-bottom:1px}
.low .val{padding-bottom:0}
.strong .label span,.red .val span{font-weight:bold}
.red .val{color:#f00}
.label{background-color:#ffe599}
.sales .cell{background-color:#f8cbad}
.total .cell{background-color:#fff2cc}
.profit .cell{background-color:#ed7d31}
.tax .cell{background-color:#ffc000}
.fee .cell{background-color:#ffe28a}
.red .cell{background-color:#ff0}
.sales .cell,.profit .cell,.tax .cell{box-shadow:inset 0 -1px #fff}
.open .val{border-left:1px dashed #c8c8c8}
.open .val:nth-child(2){border-left:1px solid #000}
.nobase .cell{border-bottom:1px dashed #c8c8c8}
.tail{height:3px;background:#ff0;border:solid #000;border-width:0 1px 1px}

.vscroll{border-right:1px solid #dcdfe5}
.vtop{width:10px;height:11px;margin:6px auto 5px 3px}
.track{background:#e8eaef;height:801px;display:flex;flex-direction:column;align-items:center}
.track .up{margin-top:8px}
.thumb{width:15px;height:49px;border-radius:7px;background:#d5d8e0;margin-top:624px}
.thumb+.caret{margin-top:33px}
.track svg{width:10px;height:60px;margin-top:13px}

.panel{padding:0 12px;color:#474f63}
.p-head{display:flex;align-items:center;height:39px;margin-left:-3px}
.p-head .caret{margin:-3px 0 0 3px}
.p-head svg{fill:none;stroke:#3e485c;stroke-width:1.400}
.pin{width:18px;height:18px;margin-left:auto}
.px{width:14px;height:14px;margin:0 -2px 0 13px}
.p-combo{margin-top:6px;height:40px;border:1px solid #d5d8df;border-radius:3px;background:#fff;display:flex;align-items:center;justify-content:space-between;padding:1px 9px 0 7px;font-size:15.500px;color:#000}
.p-combo .caret{margin-top:-3px}
.p-combo,.p-list{width:310px}
.p-btns{display:flex;gap:9px;margin-top:7px;font-size:14px}
.p-btns div{height:28px;width:85px;border:1px solid #d5d8df;background:#fff;display:flex;align-items:center;justify-content:center}
.p-btns div+div{width:95px}
.p-pick{font-size:17px;line-height:24px;margin:20px 0 6px 0}
.p-list{height:570px;border:1px solid #dcdfe5;border-radius:3px;background:#fff;padding-top:2px;color:#000}
.pi{display:flex;align-items:center;justify-content:space-between;height:43px;width:292px;margin-left:2px;padding:0 9px 0 5px;font-size:15.200px}
.pi svg{width:12px;height:12px;fill:none;stroke:#000;stroke-width:1.200;margin-top:-9px}
.pi em{font-style:normal;font-size:13px;text-decoration:underline;margin:-6px 2px 0 0;font-weight:600}
.pi.h{font-weight:bold;font-family:Lato,"Open Sans",sans-serif}
.pi.a{font-size:25px}.pi.b{font-size:23.500px}.pi.c{font-size:20.500px}
.pi.cur{border:1px solid #4a90e2;padding-left:4px;padding-right:8px}
.p-show{display:flex;align-items:center;margin-top:7px;gap:7px;color:#2f3849}
.p-show div{width:269px;height:24px;border:1px solid #d5d8df;background:#fff;display:flex;align-items:center;justify-content:space-between;padding:0 7px 0 3px;color:#474f63}
.p-prev{display:flex;gap:6px;align-items:center;margin-top:8px;color:#2f3849}
.p-prev svg{width:16px;height:16px}
.rail{border-left:1px solid #dcdfe5;display:flex;flex-direction:column;align-items:center;padding:14px 2px 0 0}
.grip{width:26px;height:5px;border:solid #cdd0d5;border-width:1px 0;margin-bottom:15px}
.rail div{width:41px;height:41px;margin-bottom:4px;display:flex;align-items:center;justify-content:center}
.rail .ic{margin-top:-2px}
.rail div.on{background:#dae0e8;border-radius:2px}
.rail footer{margin-top:auto;width:49px;height:54px;border-top:1px solid #dcdfe5;padding:22px 0 0 14px}

.status{height:35px;background:#f5f7f9;border-top:1px solid #dfe1e5;display:flex;align-items:center;font-size:13.500px}
.status>div:not(.s-right){height:19px;border-right:1px solid #d9dce2;display:flex;align-items:center}
.s1{width:85px;padding-left:10px}.s2{width:88px;padding-left:9px}.s3{width:128px;padding-left:11px;gap:4px}.s3 .caret{margin-left:8px}
.s3 span{padding-top:3px}
.s4{width:130px;padding-left:9px}
.s-right{margin-left:auto;width:627px;display:grid;align-items:center;grid-template-columns:32px 43px 37px 31px 32px 31px 25px 28px 37px 29px 23px 27px 186px 28px 30px;color:#6b7386}
.act{width:28px;height:28px;background:#dae0e8;display:flex;align-items:center;justify-content:center}
.fit{padding-left:16px;border-left:1px solid #dcdfe5;margin-left:-7px}
.pm{width:12px;height:12px}
.slider{width:172px;height:20px}

.taskbar{height:60px;display:flex;align-items:center;background:linear-gradient(90deg,#d9e3c6 0,#d6dfcf 200px,#d4ebb4 290px,#e2f09c 390px,#e7f19a 520px,#e6f09a 900px,#e9ec92 1120px,#dbe6b0 1250px,#ece48e 1340px,#e8eb92 1540px,#dbeca9 1680px,#dfe9b4 1790px,#dfeea6 1920px);color:#1b1b1b;font-size:14.500px}
.weather{width:587px;display:flex;align-items:center;padding-left:26px;gap:9px}
.weather svg{width:30px;height:20px;margin-top:-4px}
.weather div{display:flex;flex-direction:column;align-items:flex-start;line-height:20px}
.g{color:#5c6150}
.apps{display:flex;gap:25.100px;align-items:center}
.apps svg{width:30px;height:30px}
.wps{width:48px;height:48px;background:#f2f5d2;border-radius:4px;display:flex;flex-direction:column;align-items:center;justify-content:flex-end;margin-left:-9px;box-shadow:0 0 1px #9a9}
.wps::after{content:"";width:20px;height:3px;border-radius:2px;background:#e09aae;margin-top:6px;margin-bottom:1px}
.tray{margin-left:auto;display:grid;grid-template-columns:29px 30px 36px 43px 51px 30px 30px 20px 117px;align-items:center;width:390px}
.tray svg{width:20px;height:20px}
.clock{display:flex;flex-direction:column;align-items:flex-end;line-height:20px;padding-right:19px}
```
FILE: app.js
```js
// Column rules of the plan table; rows use one of the two sets.
const wide = [254, 444, 501, 565, 623, 686, 751, 817, 882, 948, 1014, 1079, 1145, 1210, 1284];
const tight = [254, 444, 501, 565, 623, 685, 743, 809, 873, 939, 1005, 1071, 1135, 1201, 1277];
const wideEnd = [436, 493, 549, 607, 670, 743, 809, 874, 940, 1006, 1071, 1138, 1203, 1277];
const tightEnd = [436, 493, 549, 607, 669, 735, 801, 865, 931, 997, 1062, 1127, 1193, 1267];
const same = (t, xs, w) => xs.map(x => [t, x, w]);

// h: height, b: tight columns, l: label markup, lw: label width,
// v: values as [text, left, width]; several lines are nested.
const rows = [
  {h: 32, c: 'sales strong', l: 'DOANH THU <u>BÁN HÀNG</u>', lw: 172, v: [
    [['170.00', 451, 36], ['0', 451]], [['200.00', 510, 33], ['0', 525]], [['220.0', 574, 29], ['00', 584]], [['250.00', 631, 33], ['0', 646]],
    ['260.000', 696, 43], ['265.000', 761.5, 43], ['270.000', 827, 41], ['275.000', 892, 43], ['283.000', 958, 43], ['291.000', 1024, 39], ['300.000', 1089, 43], ['310.000', 1155.5, 39], ['3.094.000', 1220, 50]]},
  {h: 23, c: 'strong open', l: '<u>CHÍ</u> <u>PHÍ</u>', lw: 62, lp: 1, v: []},
  {h: 32, b: 1, loose: 1, l: '<u>Lương</u>', lw: 41, lp: 1, v: [
    ['168.000', 448, 43], ['168.000', 505, 43], [['168.00', 566.5, 36], ['0', 566]], ['168.000', 626, 43], ['168.000', 690, 43], ...same('168.000', [750.7, 816.7, 882, 948, 1012.5, 1078.6, 1144], 43), ['2.016.000', 1208, 53]]},
  {h: 22, b: 1, c: 'low', l: '<u>Quảng</u> <u>cáo</u>', lw: 68, v: [
    ['6.000', 453.5, 26.5], ['6.000', 510, 30], ['6.000', 572, 26.5], ['6.000', 631, 30], ['6.000', 695.5, 30], ['6.000', 757.5, 26.5], ['6.000', 823, 26], ['6.000', 888, 29.5], ['6.000', 953, 30], ['6.000', 1019, 26.5], ['6.000', 1084.5, 30], ['6.000', 1150, 27], ['72.000', 1217, 32]]},
  {h: 29, b: 1, c: 'nobase low', loose: 1, l: '<u>Sữa</u> <u>chữa</u> <u>và</u> <u>bảo</u> <u>trì</u>', lw: 121, lp: 9, v: [
    ['5.000', 454, 26], ['5.000', 510.5, 30], ['5.000', 572, 26], ...same('5.000', [631, 695.5, 757.5, 822.5, 888, 953.5, 1020, 1084.5, 1150.5], 30), ['60.000', 1216, 33]]},
  {h: 16, l: '<u>trang</u> <u>thiết</u> <u>bị</u>', lw: 81, v: []},
  {h: 23, b: 1, c: 'low', l: '<u>Mặt</u> <u>bằng</u>', lw: 59, v: [
    ['10.000', 451, 36], ...same('10.000', [507.5, 568.5, 628.5, 692.5, 754, 819, 885, 950.5, 1016.5, 1081.5, 1147.5], 33), ['120.000', 1213.5, 43]]},
  {h: 23, b: 1, c: 'low', l: '<u>Tiền</u> <u>điện</u>', lw: 59, v: [
    ...same('4.000', [454, 511, 572, 632, 696, 757.5, 823, 888, 954, 1019, 1085, 1150], 26.5), ['48.000', 1216, 34]]},
  {h: 22, b: 1, c: 'low', loose: 1, l: '<u>Tiền</u> <u>điện</u> <u>thoại</u>', lw: 95, v: [
    ...same('2.000', [454, 510, 571, 631, 695, 757, 822, 888, 954, 1019, 1085, 1150], 27), ['24.000', 1216, 33]]},
  {h: 23, b: 1, c: 'low', loose: 1, l: '<u>Khấu</u> <u>hao</u>', lw: 59, v: [
    ...same('3.000', [454, 511, 572, 632, 696, 757.5, 823, 888, 954, 1019, 1085], 26.5), ['3.000 .', 1148, 33], ['3.000', 1220, 26.5]]},
  {h: 23, b: 1, c: 'low', l: '<u>Phí</u> <u>bảo</u> <u>hiểm</u>', lw: 84, v: [
    ...same('10.000', [451, 502.5, 568.5, 629.5, 692.5, 754, 820, 885, 951, 1016, 1082, 1147.5], 32.5), ['120.000', 1213.5, 43]]},
  {h: 23, loose: 1, l: '<u>Giấy</u> <u>phép</u> <u>kinh</u> <u>doanh</u>', lw: 136, v: [['2.600', 454, 26], , , , , , , , , , , , ['2.600', 1229, 29]]},
  {h: 32, c: 'total strong', l: '<u>Tông</u> chi <u>phí</u>', lw: 84, lp: 1, v: [
    [['210.00', 453.5, 36], ['0', 468]], [['207.00', 508.5, 32.5], ['4', 508.5]], [['207.0', 575, 27], ['04', 583]], [['207.00', 631, 33], ['4', 646]],
    ['207.004', 696, 39], ['207.004', 757, 39], ['207.004', 827, 39], ['207.004 1', 890, 47], ['207.004 1', 955, 48], ['207.004', 1024, 39], ['207.004 1', 1087, 47], ['207.004', 1155.5, 39], ['2491004', 1217, 46]]},
  {h: 32, c: 'profit strong', l: '<u>Lợi</u> <u>nhuận</u> (<u>trước</u> <u>thuế</u>)', lw: 156, lp: 1, v: [
    ['-40.000', 451, 40], ['-7.004', 511, 34], [['12.99', 575, 26], ['6', 586]], ['42.996', 631, 33], ['52.006', 699, 33], ['58.759', 765.5, 36], ['62.996', 830, 36], ['67.996', 888, 33], ['76.006', 962, 33], ['88.006', 1027.5, 36], ['93.006', 1092.5, 34], ['103.006', 1155.5, 43], ['610.367', 1225, 43]]},
  {h: 32, c: 'tax strong', l: 'Chi <u>phí</u> <u>thuế</u> TNDN', lw: 135, lp: 1, v: [
    ['24.120', 453.5, 36], ['24.120', 510, 33], [['24.12', 574, 30], ['0', 586]], ['24.120', 631, 33], ['24.120', 699, 33], ['24.120', 765, 36], ['24.120', 830, 36], ['24.120', 896, 33], ['24.120', 962, 33], ['24.120', 1027.5, 36], ['24.120', 1092.5, 34], ['24.120', 1158, 36], ['289.440', 1225, 43]]},
  {h: 22, c: 'fee strong low', l: '<u>Thuế</u> <u>môn</u> <u>bài</u>', lw: 95, v: [['1', 481], , , , , , , , , , , , ['1.000', 1232.5, 29]]},
  {h: 47, c: 'red strong low', l: '<u>Lợi</u> <u>nhuận</u> <u>sau</u> <u>thuế</u>', lw: 132, v: [
    ['-59.011', 451, 40], ['-32.711', 508.5, 40], [['-', 586], ['15.61', 575, 27], ['1', 586]], ['1.339', 634, 30], ['20.239', 699, 35], ['34.639', 765, 36], ['54.889', 830, 36], ['67.789', 896, 35], ['72.739', 962, 35], ['43.489', 1027.5, 36], ['36.889', 1092.5, 35], ['53.389', 1158, 36], ['277.068', 1225, 43]]}
];

const line = ([t, x, w], left) =>
  `<span class="${w && w < t.length * 5.75 ? 'sm' : ''}" style="margin-left:${x - left - 2}px"${w ? ` data-w="${w}"` : ''}>${t}</span>`;

function rowHtml(r) {
  const cols = r.b ? tight : wide, ends = r.b ? tightEnd : wideEnd;
  let out = `<div class="prow ${r.c || ''}">`;
  for (let i = 0; i < 14; i++) {
    const left = cols[i], width = cols[i + 1] - left;
    const gl = i === 0 ? 7 : r.b ? -5 : 6;
    const style = `width:${width}px;height:${r.h}px;--gl:${gl}px;--gr:${ends[i] - left - 1}px`;
    if (i === 0) {
      out += `<div class="cell label${r.loose ? ' loose' : ''}" style="${style};padding-bottom:${r.lp || 0}px"><span data-w="${r.lw}">${r.l}</span></div>`;
    } else {
      const v = r.v[i - 1];
      const lines = !v ? [] : Array.isArray(v[0]) ? v : [v];
      out += `<div class="cell val" style="${style}">${lines.map(l => line(l, left)).join('')}</div>`;
    }
  }
  return out + '</div>';
}

document.getElementById('months').innerHTML = Array.from({length: 12}, (_, i) => {
  const left = wide[i + 1], w = wide[i + 2] - left;
  return `<div class="cell" style="width:${i === 0 ? w - 1 : w}px;--gl:6px;--gr:${wideEnd[i + 1] - left - 1}px"><span>${i + 1}</span></div>`;
}).join('');
document.getElementById('plan').insertAdjacentHTML('beforeend', rows.map(rowHtml).join('') + '<div class="tail"></div>');

const stub = [418, 542, 592, 643, 695, 746, 803, 862, 919, 976, 1034, 1091, 1151, 1208, 1276];
document.getElementById('stubRow').innerHTML = stub.slice(1).map((x, i) => `<i style="width:${x - stub[i]}px"></i>`).join('');

// Track each label out or in to its set width.
document.querySelectorAll('[data-w]').forEach(el => {
  const range = document.createRange();
  range.selectNodeContents(el);
  const n = el.textContent.length;
  if (n < 2) return;
  const s = (el.dataset.w - range.getBoundingClientRect().width) / (n - 1);
  el.style.letterSpacing = s.toFixed(3) + 'px';
  el.style.marginRight = (-s).toFixed(3) + 'px';
});
```
